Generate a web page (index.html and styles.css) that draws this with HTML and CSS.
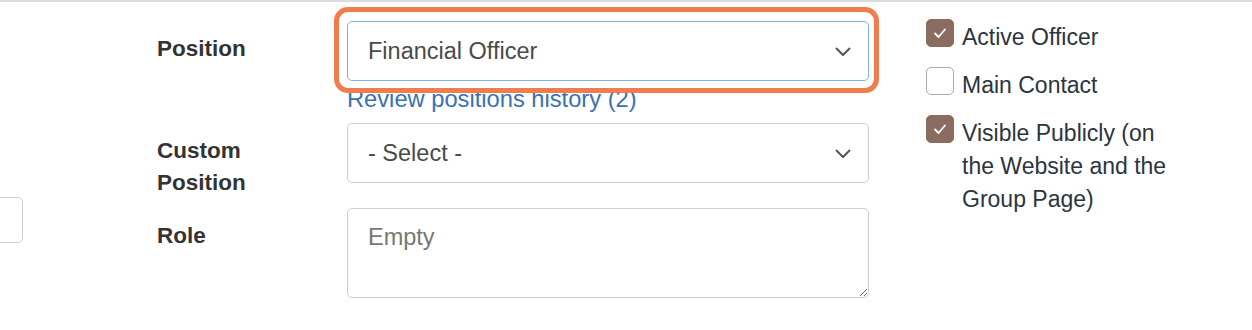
FILE: index.html
```html
<!DOCTYPE html>
<html lang="en">
<head>
<meta charset="utf-8">
<title>Officer form</title>
<link rel="stylesheet" href="styles.css">
</head>
<body>
<div class="page">
  <div class="stub-col"><div class="stub"></div></div>

  <div class="form">
    <div class="row row-position">
      <div class="label">Position</div>
      <div class="field">
        <div class="select select-focused">
          <span class="select-text">Financial Officer</span>
          <svg class="chevron" width="16" height="10" viewBox="0 0 16 10"><polyline points="1.5,1.5 8,8 14.5,1.5" fill="none" stroke="#555" stroke-width="2" stroke-linecap="round" stroke-linejoin="round"/></svg>
          <div class="highlight"></div>
        </div>
        <a class="link" href="#">Review positions history (2)</a>
      </div>
    </div>

    <div class="row row-custom">
      <div class="label">Custom<br>Position</div>
      <div class="field">
        <div class="select">
          <span class="select-text">- Select -</span>
          <svg class="chevron" width="16" height="10" viewBox="0 0 16 10"><polyline points="1.5,1.5 8,8 14.5,1.5" fill="none" stroke="#555" stroke-width="2" stroke-linecap="round" stroke-linejoin="round"/></svg>
        </div>
      </div>
    </div>

    <div class="row row-role">
      <div class="label">Role</div>
      <div class="field">
        <textarea class="textarea" placeholder="Empty"></textarea>
      </div>
    </div>
  </div>

  <div class="checks">
    <div class="check">
      <span class="box box-on"><svg width="14" height="12" viewBox="0 0 14 12"><polyline points="2,6.5 5.5,10 12,2.5" fill="none" stroke="#fff" stroke-width="1.8" stroke-linecap="round" stroke-linejoin="round"/></svg></span>
      <span class="check-label">Active Officer</span>
    </div>
    <div class="check">
      <span class="box"></span>
      <span class="check-label">Main Contact</span>
    </div>
    <div class="check">
      <span class="box box-on"><svg width="14" height="12" viewBox="0 0 14 12"><polyline points="2,6.5 5.5,10 12,2.5" fill="none" stroke="#fff" stroke-width="1.8" stroke-linecap="round" stroke-linejoin="round"/></svg></span>
      <span class="check-label">Visible Publicly (on the Website and the Group Page)</span>
    </div>
  </div>
</div>
</body>
</html>
```

FILE: styles.css
```css
html, body {
  margin: 0;
  padding: 0;
  background: #fff;
}

body {
  font-family: "Liberation Sans", Arial, Helvetica, sans-serif;
  color: #333;
  overflow: hidden;
}

.page {
  border-top: 2px solid #dcdcdc;
  padding-top: 19px;
  display: flex;
  align-items: flex-start;
  height: 330px;
  box-sizing: border-box;
}

.stub-col {
  width: 24px;
  flex: none;
  overflow: hidden;
}

.stub {
  margin-top: 176px;
  margin-left: -10px;
  width: 31px;
  height: 44px;
  border: 1px solid #cfcfcf;
  border-radius: 5px;
}

.form {
  margin-left: 133px;
  flex: none;
}

.row {
  display: flex;
  align-items: flex-start;
}

.row-position { margin-bottom: 11px; }
.row-custom { margin-bottom: 9px; }

.label {
  width: 190px;
  flex: none;
  padding-top: 12px;
  font-size: 22.5px;
  line-height: 32px;
  font-weight: bold;
  color: #333;
}

.field {
  width: 522px;
  flex: none;
  display: flex;
  flex-direction: column;
}

.select {
  position: relative;
  box-sizing: border-box;
  height: 60px;
  border: 1px solid #cfcfcf;
  border-radius: 5px;
  display: flex;
  align-items: center;
  justify-content: space-between;
  padding: 0 17px 0 20px;
  background: #fff;
}

.select-focused {
  border-color: #7fb0e4;
}

.select-text {
  font-size: 23.5px;
  color: #4a4a4a;
}

.chevron {
  display: block;
  margin-top: 1px;
}

.highlight {
  position: absolute;
  left: -14px;
  top: -15px;
  right: -11px;
  bottom: -13px;
  border: 5px solid #ef7d4e;
  border-radius: 14px;
  pointer-events: none;
}

.link {
  margin-top: 5px;
  font-size: 23.7px;
  line-height: 26px;
  color: #3a72b2;
  text-decoration: none;
}

.textarea {
  display: block;
  box-sizing: border-box;
  width: 522px;
  height: 90px;
  margin: 0;
  border: 1px solid #cfcfcf;
  border-radius: 5px;
  padding: 15px 20px;
  font-family: "Liberation Sans", Arial, Helvetica, sans-serif;
  font-size: 23.5px;
  line-height: 26px;
  color: #4a4a4a;
  resize: both;
}

.textarea::placeholder {
  color: #777;
}

.checks {
  margin-left: 57px;
  margin-top: -2px;
  width: 260px;
  flex: none;
  display: flex;
  flex-direction: column;
  gap: 15px;
}

.check {
  display: flex;
  align-items: flex-start;
}

.box {
  flex: none;
  box-sizing: border-box;
  width: 28px;
  height: 28px;
  border: 1.5px solid #a3afb8;
  border-radius: 5px;
  background: #fff;
  display: flex;
  align-items: center;
  justify-content: center;
}

.box-on {
  background: #8a6c61;
  border-color: #8a6c61;
}

.check-label {
  margin-left: 8px;
  margin-top: 2px;
  margin-bottom: -2px;
  width: 215px;
  font-size: 23px;
  line-height: 33px;
  color: #2c3440;
}
```
